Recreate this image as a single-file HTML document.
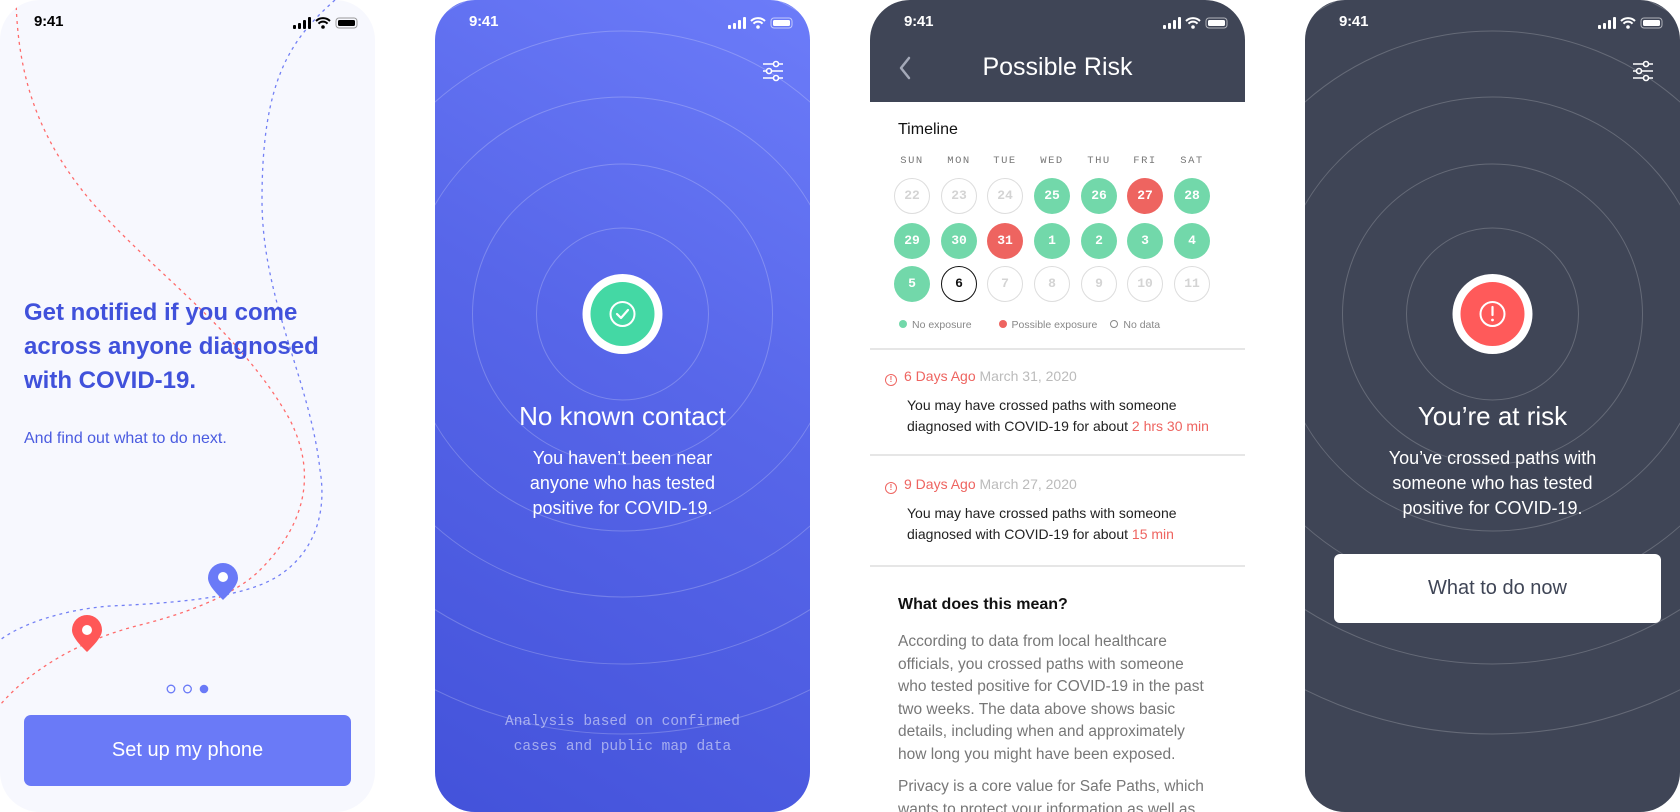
<!DOCTYPE html>
<html><head><meta charset="utf-8"><style>
*{margin:0;padding:0;box-sizing:border-box}
body{width:1680px;height:812px;background:#fff;position:relative;overflow:hidden;font-family:"Liberation Sans",sans-serif}
.ph{position:absolute;top:0;width:375px;height:812px;border-radius:40px;overflow:hidden}
.abs{position:absolute}
.time{position:absolute;left:34px;top:13px;font-size:15px;font-weight:600;letter-spacing:-0.2px}
.ctr{position:absolute;left:0;width:375px;text-align:center}
.day{position:absolute;width:36px;height:36px;border-radius:50%;text-align:center;line-height:36px;font-family:"Liberation Mono",monospace;font-size:13px;font-weight:bold;color:#fff}
.g{background:#72d8aa}.r{background:#ee6460}.e{border:1px solid #ddd;color:#d4d4d4;line-height:34px}
.lbl{position:absolute;top:155px;width:40px;text-align:center;font-family:"Liberation Mono",monospace;font-size:10.5px;color:#777;letter-spacing:1.5px}
.txt{position:absolute;left:37px;font-size:14px;color:#222;line-height:21px}
.para{position:absolute;left:28px;width:340px;font-size:15.5px;color:#777;line-height:22.5px;white-space:nowrap}
</style></head><body>

<!-- Phone 1 -->
<div class="ph" style="left:0;background:#f7f8fe">
<svg class="abs" style="left:0;top:0" width="375" height="812" viewBox="0 0 375 812">
<path d="M16 0 C18 80 40 140 90 200 C150 270 240 330 290 420 C320 480 300 530 260 570 C240 590 200 610 140 625 C80 640 30 670 0 705" fill="none" stroke="#ff6b6b" stroke-width="1.3" stroke-dasharray="3 4"/>
<path d="M335 0 C290 40 262 80 262 200 C262 300 310 380 320 470 C330 530 300 570 260 585 C230 597 180 603 110 606 C60 610 20 625 0 640" fill="none" stroke="#7380f5" stroke-width="1.3" stroke-dasharray="3 4"/>
<path d="M223 563 a15 15 0 0 1 15 15 c0 7 -8 15 -15 22 c-7 -7 -15 -15 -15 -22 a15 15 0 0 1 15 -15z" fill="#6a7af7"/>
<circle cx="223" cy="577" r="5" fill="#fff"/>
<path d="M87 615 a15 15 0 0 1 15 15 c0 7 -8 15 -15 22 c-7 -7 -15 -15 -15 -22 a15 15 0 0 1 15 -15z" fill="#ff5757"/>
<circle cx="87" cy="630" r="5" fill="#fff"/>
<circle cx="171" cy="689" r="3.8" fill="none" stroke="#6a7af7" stroke-width="1.3"/>
<circle cx="187.5" cy="689" r="3.8" fill="none" stroke="#6a7af7" stroke-width="1.3"/>
<circle cx="204" cy="689" r="4.3" fill="#6a7af7"/>
</svg>
<div class="time" style="color:#000">9:41</div>
<svg class="abs" style="left:293px;top:17px" width="66" height="13"><rect x="0" y="8" width="3" height="4" rx="1"/><rect x="5" y="6" width="3" height="6" rx="1"/><rect x="10" y="3" width="3" height="9" rx="1"/><rect x="15" y="0" width="3" height="12" rx="1"/><path d="M23 4 a10 10 0 0 1 14 0 M25.5 6.7 a6 6 0 0 1 9 0" stroke="#000" stroke-width="2" fill="none"/><circle cx="30" cy="10" r="1.8"/><rect x="43" y="1" width="21" height="10" rx="3" fill="none" stroke="#999"/><rect x="45" y="3" width="17" height="6" rx="1.5"/></svg>
<div class="abs" style="left:24px;top:296px;font-size:24px;line-height:34px;color:#4051db;font-weight:bold;white-space:nowrap">Get notified if you come<br>across anyone diagnosed<br>with COVID-19.</div>
<div class="abs" style="left:24px;top:430px;font-size:16px;color:#4a5be0">And find out what to do next.</div>
<div class="abs" style="left:24px;top:715px;width:327px;height:71px;border-radius:7px;background:#6a7af7;color:#fff;font-size:20px;text-align:center;line-height:71px">Set up my phone</div>
</div>

<!-- Phone 2 -->
<div class="ph" style="left:435px;background:linear-gradient(30deg,#4352da 0%,#5766e9 55%,#6c7cf9 100%)">
<svg class="abs" style="left:0;top:0" width="375" height="812"><g fill="none" stroke="rgba(255,255,255,0.22)" stroke-width="1"><circle cx="187.5" cy="314" r="86"/><circle cx="187.5" cy="314" r="150"/><circle cx="187.5" cy="314" r="217"/><circle cx="187.5" cy="314" r="283"/><circle cx="187.5" cy="314" r="350"/><circle cx="187.5" cy="314" r="420"/></g>
<circle cx="187.5" cy="314" r="40" fill="#fff"/><circle cx="187.5" cy="314" r="32" fill="#44d8a4"/><circle cx="187.5" cy="314" r="12" fill="none" stroke="#fff" stroke-width="2"/><path d="M182 314 l4 4 l7 -8" fill="none" stroke="#fff" stroke-width="2.2" stroke-linecap="round" stroke-linejoin="round"/>
<g stroke="#fff" stroke-width="1.6" fill="none"><path d="M328 64h20M328 71h20M328 78h20"/><circle cx="341" cy="64" r="2.5" fill="#5f6ef1"/><circle cx="334" cy="71" r="2.5" fill="#5f6ef1"/><circle cx="341" cy="78" r="2.5" fill="#5f6ef1"/></g>
</svg>
<div class="time" style="color:#fff">9:41</div>
<svg class="abs" style="left:293px;top:17px" width="66" height="13" fill="#fff"><rect x="0" y="8" width="3" height="4" rx="1"/><rect x="5" y="6" width="3" height="6" rx="1"/><rect x="10" y="3" width="3" height="9" rx="1"/><rect x="15" y="0" width="3" height="12" rx="1"/><path d="M23 4 a10 10 0 0 1 14 0 M25.5 6.7 a6 6 0 0 1 9 0" stroke="#fff" stroke-width="2" fill="none"/><circle cx="30" cy="10" r="1.8"/><rect x="43" y="1" width="21" height="10" rx="3" fill="none" stroke="rgba(255,255,255,0.6)"/><rect x="45" y="3" width="17" height="6" rx="1.5"/></svg>
<div class="ctr" style="top:401px;font-size:26px;color:#fff;font-weight:500">No known contact</div>
<div class="ctr" style="top:446px;font-size:18px;line-height:25px;color:#fff">You haven’t been near<br>anyone who has tested<br>positive for COVID-19.</div>
<div class="ctr" style="top:710px;font-family:'Liberation Mono',monospace;font-size:14.5px;line-height:25px;color:rgba(255,255,255,0.5)">Analysis based on confirmed<br>cases and public map data</div>
</div>

<!-- Phone 3 -->
<div class="ph" style="left:870px;background:#fff;border-radius:40px 40px 0 0">
<div class="abs" style="left:0;top:0;width:375px;height:102px;background:#3f4556"></div>
<div class="time" style="color:#fff">9:41</div>
<svg class="abs" style="left:293px;top:17px" width="66" height="13" fill="#fff"><rect x="0" y="8" width="3" height="4" rx="1"/><rect x="5" y="6" width="3" height="6" rx="1"/><rect x="10" y="3" width="3" height="9" rx="1"/><rect x="15" y="0" width="3" height="12" rx="1"/><path d="M23 4 a10 10 0 0 1 14 0 M25.5 6.7 a6 6 0 0 1 9 0" stroke="#fff" stroke-width="2" fill="none"/><circle cx="30" cy="10" r="1.8"/><rect x="43" y="1" width="21" height="10" rx="3" fill="none" stroke="rgba(255,255,255,0.6)"/><rect x="45" y="3" width="17" height="6" rx="1.5"/></svg>
<svg class="abs" style="left:28px;top:56px" width="14" height="24"><path d="M11 2 L3 12 L11 22" fill="none" stroke="#a4a9b8" stroke-width="2.5" stroke-linecap="round" stroke-linejoin="round"/></svg>
<div class="ctr" style="top:53px;font-size:25px;color:#fff;font-weight:500">Possible Risk</div>
<div class="abs" style="left:28px;top:121px;font-size:16px;font-weight:500;color:#111">Timeline</div>
<div class="lbl" style="left:22px">SUN</div><div class="lbl" style="left:69px">MON</div><div class="lbl" style="left:115px">TUE</div><div class="lbl" style="left:162px">WED</div><div class="lbl" style="left:209px">THU</div><div class="lbl" style="left:255px">FRI</div><div class="lbl" style="left:302px">SAT</div>
<div class="day e" style="left:24px;top:178px">22</div><div class="day e" style="left:71px;top:178px">23</div><div class="day e" style="left:117px;top:178px">24</div><div class="day g" style="left:164px;top:178px">25</div><div class="day g" style="left:211px;top:178px">26</div><div class="day r" style="left:257px;top:178px">27</div><div class="day g" style="left:304px;top:178px">28</div>
<div class="day g" style="left:24px;top:223px">29</div><div class="day g" style="left:71px;top:223px">30</div><div class="day r" style="left:117px;top:223px">31</div><div class="day g" style="left:164px;top:223px">1</div><div class="day g" style="left:211px;top:223px">2</div><div class="day g" style="left:257px;top:223px">3</div><div class="day g" style="left:304px;top:223px">4</div>
<div class="day g" style="left:24px;top:266px">5</div><div class="day" style="left:71px;top:266px;border:1.3px solid #111;color:#111;line-height:33px">6</div><div class="day e" style="left:117px;top:266px">7</div><div class="day e" style="left:164px;top:266px">8</div><div class="day e" style="left:211px;top:266px">9</div><div class="day e" style="left:257px;top:266px">10</div><div class="day e" style="left:304px;top:266px">11</div>
<div class="abs" style="left:29px;top:319px;font-size:10.5px;color:#888;white-space:nowrap"><span style="display:inline-block;width:8px;height:8px;border-radius:50%;background:#72d8aa;margin-right:5px"></span>No exposure<span style="display:inline-block;width:8px;height:8px;border-radius:50%;background:#ee6460;margin:0 5px 0 27px"></span>Possible exposure<span style="display:inline-block;width:8px;height:8px;border-radius:50%;border:1px solid #888;margin:0 5px 0 13px"></span>No data</div>
<div class="abs" style="left:0;top:348px;width:375px;height:2px;background:#e6e6e6"></div>
<div class="abs" style="left:15px;top:368px;font-size:14px;color:#ee6460;white-space:nowrap"><span style="display:inline-block;width:12px;height:12px;border:1.5px solid #ee6460;border-radius:50%;font-size:8px;line-height:9px;text-align:center;font-weight:bold;vertical-align:-1px;margin-right:7px">!</span>6 Days Ago <span style="color:#bbb">March 31, 2020</span></div>
<div class="txt" style="top:395px">You may have crossed paths with someone<br>diagnosed with COVID-19 for about <span style="color:#ee6460">2 hrs 30 min</span></div>
<div class="abs" style="left:0;top:454px;width:375px;height:2px;background:#e6e6e6"></div>
<div class="abs" style="left:15px;top:476px;font-size:14px;color:#ee6460;white-space:nowrap"><span style="display:inline-block;width:12px;height:12px;border:1.5px solid #ee6460;border-radius:50%;font-size:8px;line-height:9px;text-align:center;font-weight:bold;vertical-align:-1px;margin-right:7px">!</span>9 Days Ago <span style="color:#bbb">March 27, 2020</span></div>
<div class="txt" style="top:503px">You may have crossed paths with someone<br>diagnosed with COVID-19 for about <span style="color:#ee6460">15 min</span></div>
<div class="abs" style="left:0;top:565px;width:375px;height:2px;background:#e6e6e6"></div>
<div class="abs" style="left:28px;top:596px;font-size:16px;font-weight:600;color:#111">What does this mean?</div>
<div class="para" style="top:631px">According to data from local healthcare<br>officials, you crossed paths with someone<br>who tested positive for COVID-19 in the past<br>two weeks. The data above shows basic<br>details, including when and approximately<br>how long you might have been exposed.</div>
<div class="para" style="top:776px">Privacy is a core value for Safe Paths, which<br>wants to protect your information as well as</div>
</div>

<!-- Phone 4 -->
<div class="ph" style="left:1305px;background:#3f4556">
<svg class="abs" style="left:0;top:0" width="375" height="812"><g fill="none" stroke="rgba(255,255,255,0.2)" stroke-width="1"><circle cx="187.5" cy="314" r="86"/><circle cx="187.5" cy="314" r="150"/><circle cx="187.5" cy="314" r="217"/><circle cx="187.5" cy="314" r="283"/><circle cx="187.5" cy="314" r="350"/><circle cx="187.5" cy="314" r="420"/></g>
<circle cx="187.5" cy="314" r="40" fill="#fff"/><circle cx="187.5" cy="314" r="32" fill="#ff5a5a"/><circle cx="187.5" cy="314" r="12" fill="none" stroke="#fff" stroke-width="2"/><path d="M187.5 307v8" stroke="#fff" stroke-width="2.2" stroke-linecap="round"/><circle cx="187.5" cy="320" r="1.4" fill="#fff"/>
<g stroke="#fff" stroke-width="1.6" fill="none"><path d="M328 64h20M328 71h20M328 78h20"/><circle cx="341" cy="64" r="2.5" fill="#3f4556"/><circle cx="334" cy="71" r="2.5" fill="#3f4556"/><circle cx="341" cy="78" r="2.5" fill="#3f4556"/></g>
</svg>
<div class="time" style="color:#fff">9:41</div>
<svg class="abs" style="left:293px;top:17px" width="66" height="13" fill="#fff"><rect x="0" y="8" width="3" height="4" rx="1"/><rect x="5" y="6" width="3" height="6" rx="1"/><rect x="10" y="3" width="3" height="9" rx="1"/><rect x="15" y="0" width="3" height="12" rx="1"/><path d="M23 4 a10 10 0 0 1 14 0 M25.5 6.7 a6 6 0 0 1 9 0" stroke="#fff" stroke-width="2" fill="none"/><circle cx="30" cy="10" r="1.8"/><rect x="43" y="1" width="21" height="10" rx="3" fill="none" stroke="rgba(255,255,255,0.6)"/><rect x="45" y="3" width="17" height="6" rx="1.5"/></svg>
<div class="ctr" style="top:401px;font-size:26px;color:#fff;font-weight:500">You’re at risk</div>
<div class="ctr" style="top:446px;font-size:18px;line-height:25px;color:#fff">You’ve crossed paths with<br>someone who has tested<br>positive for COVID-19.</div>
<div class="abs" style="left:29px;top:554px;width:327px;height:69px;border-radius:6px;background:#fff;color:#3f4556;font-size:20px;text-align:center;line-height:69px">What to do now</div>
</div>
</body></html>
